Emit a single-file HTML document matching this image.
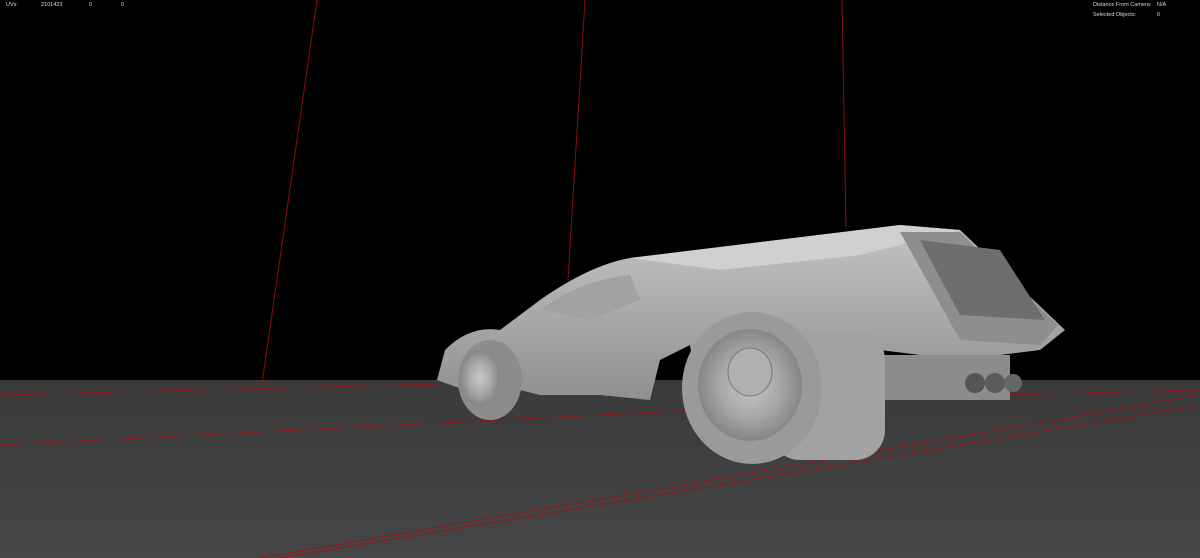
<!DOCTYPE html>
<html><head><style>
html,body{margin:0;padding:0;width:1200px;height:558px;overflow:hidden;background:#000;}
.t{position:absolute;font-family:"Liberation Sans",sans-serif;font-size:5.5px;color:#ddd;}
</style></head><body>
<svg width="1200" height="558" style="position:absolute;left:0;top:0">
<defs>
<linearGradient id="fl" x1="0" y1="0" x2="0" y2="1">
<stop offset="0" stop-color="#3a3a3a"/><stop offset="1" stop-color="#464646"/></linearGradient>
<linearGradient id="body" x1="0" y1="0" x2="0" y2="1">
<stop offset="0" stop-color="#c4c4c4"/><stop offset="1" stop-color="#8a8a8a"/></linearGradient>
<radialGradient id="wh" cx="0.5" cy="0.5" r="0.5">
<stop offset="0" stop-color="#c8c8c8"/><stop offset="0.6" stop-color="#a6a6a6"/><stop offset="1" stop-color="#868686"/></radialGradient>
</defs>
<rect x="0" y="380" width="1200" height="178" fill="url(#fl)"/>
<g stroke="#a01010" stroke-width="1" fill="none" opacity="0.85">
<line x1="317" y1="0" x2="262" y2="384"/>
<line x1="585" y1="0" x2="568" y2="280"/>
<line x1="842" y1="0" x2="846" y2="228"/>
<line x1="0" y1="395" x2="440" y2="384"/>
<line x1="0" y1="445" x2="700" y2="410"/>
<line x1="260" y1="558" x2="1200" y2="395"/>
<line x1="280" y1="558" x2="1200" y2="405"/>
<line x1="1000" y1="395" x2="1200" y2="390"/>
</g>
<path d="M437,380 L445,350 Q470,325 500,330 L540,300 Q590,265 630,258 L900,225 L960,230 L1065,330 L1040,350 L960,360 L880,350 L840,420 L700,410 L690,345 L660,360 L650,400 L600,395 L540,395 L520,390 Q505,372 480,372 L470,392 Z" fill="url(#body)"/>
<path d="M630,258 L900,225 L960,230 L860,255 L720,270 Z" fill="#d0d0d0"/>
<path d="M900,232 L960,232 L1058,325 L1040,345 L960,340 Z" fill="#8e8e8e"/>
<path d="M920,240 L1000,250 L1045,320 L960,315 Z" fill="#6e6e6e"/>
<path d="M540,310 Q580,280 630,275 L640,300 L590,320 Z" fill="#a2a2a2"/>
<rect x="880" y="355" width="130" height="45" fill="#8c8c8c"/>
<circle cx="975" cy="383" r="10" fill="#555"/><circle cx="995" cy="383" r="10" fill="#5a5a5a"/><circle cx="1013" cy="383" r="9" fill="#666"/>
<rect x="770" y="330" width="115" height="130" rx="30" fill="#a2a2a2"/>
<ellipse cx="752" cy="388" rx="70" ry="76" fill="#9a9a9a"/>
<ellipse cx="750" cy="385" rx="52" ry="56" fill="url(#wh)"/>
<ellipse cx="750" cy="372" rx="22" ry="24" fill="#b0b0b0" stroke="#777"/>
<ellipse cx="490" cy="380" rx="32" ry="40" fill="#8c8c8c"/>
<ellipse cx="480" cy="378" rx="20" ry="28" fill="url(#wh)"/>
</svg>
<div class="t" style="left:6px;top:2px">UVs:</div>
<div class="t" style="left:41px;top:2px">2101423</div>
<div class="t" style="left:89px;top:2px">0</div>
<div class="t" style="left:121px;top:2px">0</div>
<div class="t" style="left:1093px;top:2px">Distance From Camera:</div>
<div class="t" style="left:1157px;top:2px">N/A</div>
<div class="t" style="left:1093px;top:12px">Selected Objects:</div>
<div class="t" style="left:1157px;top:12px">0</div>
</body></html>
